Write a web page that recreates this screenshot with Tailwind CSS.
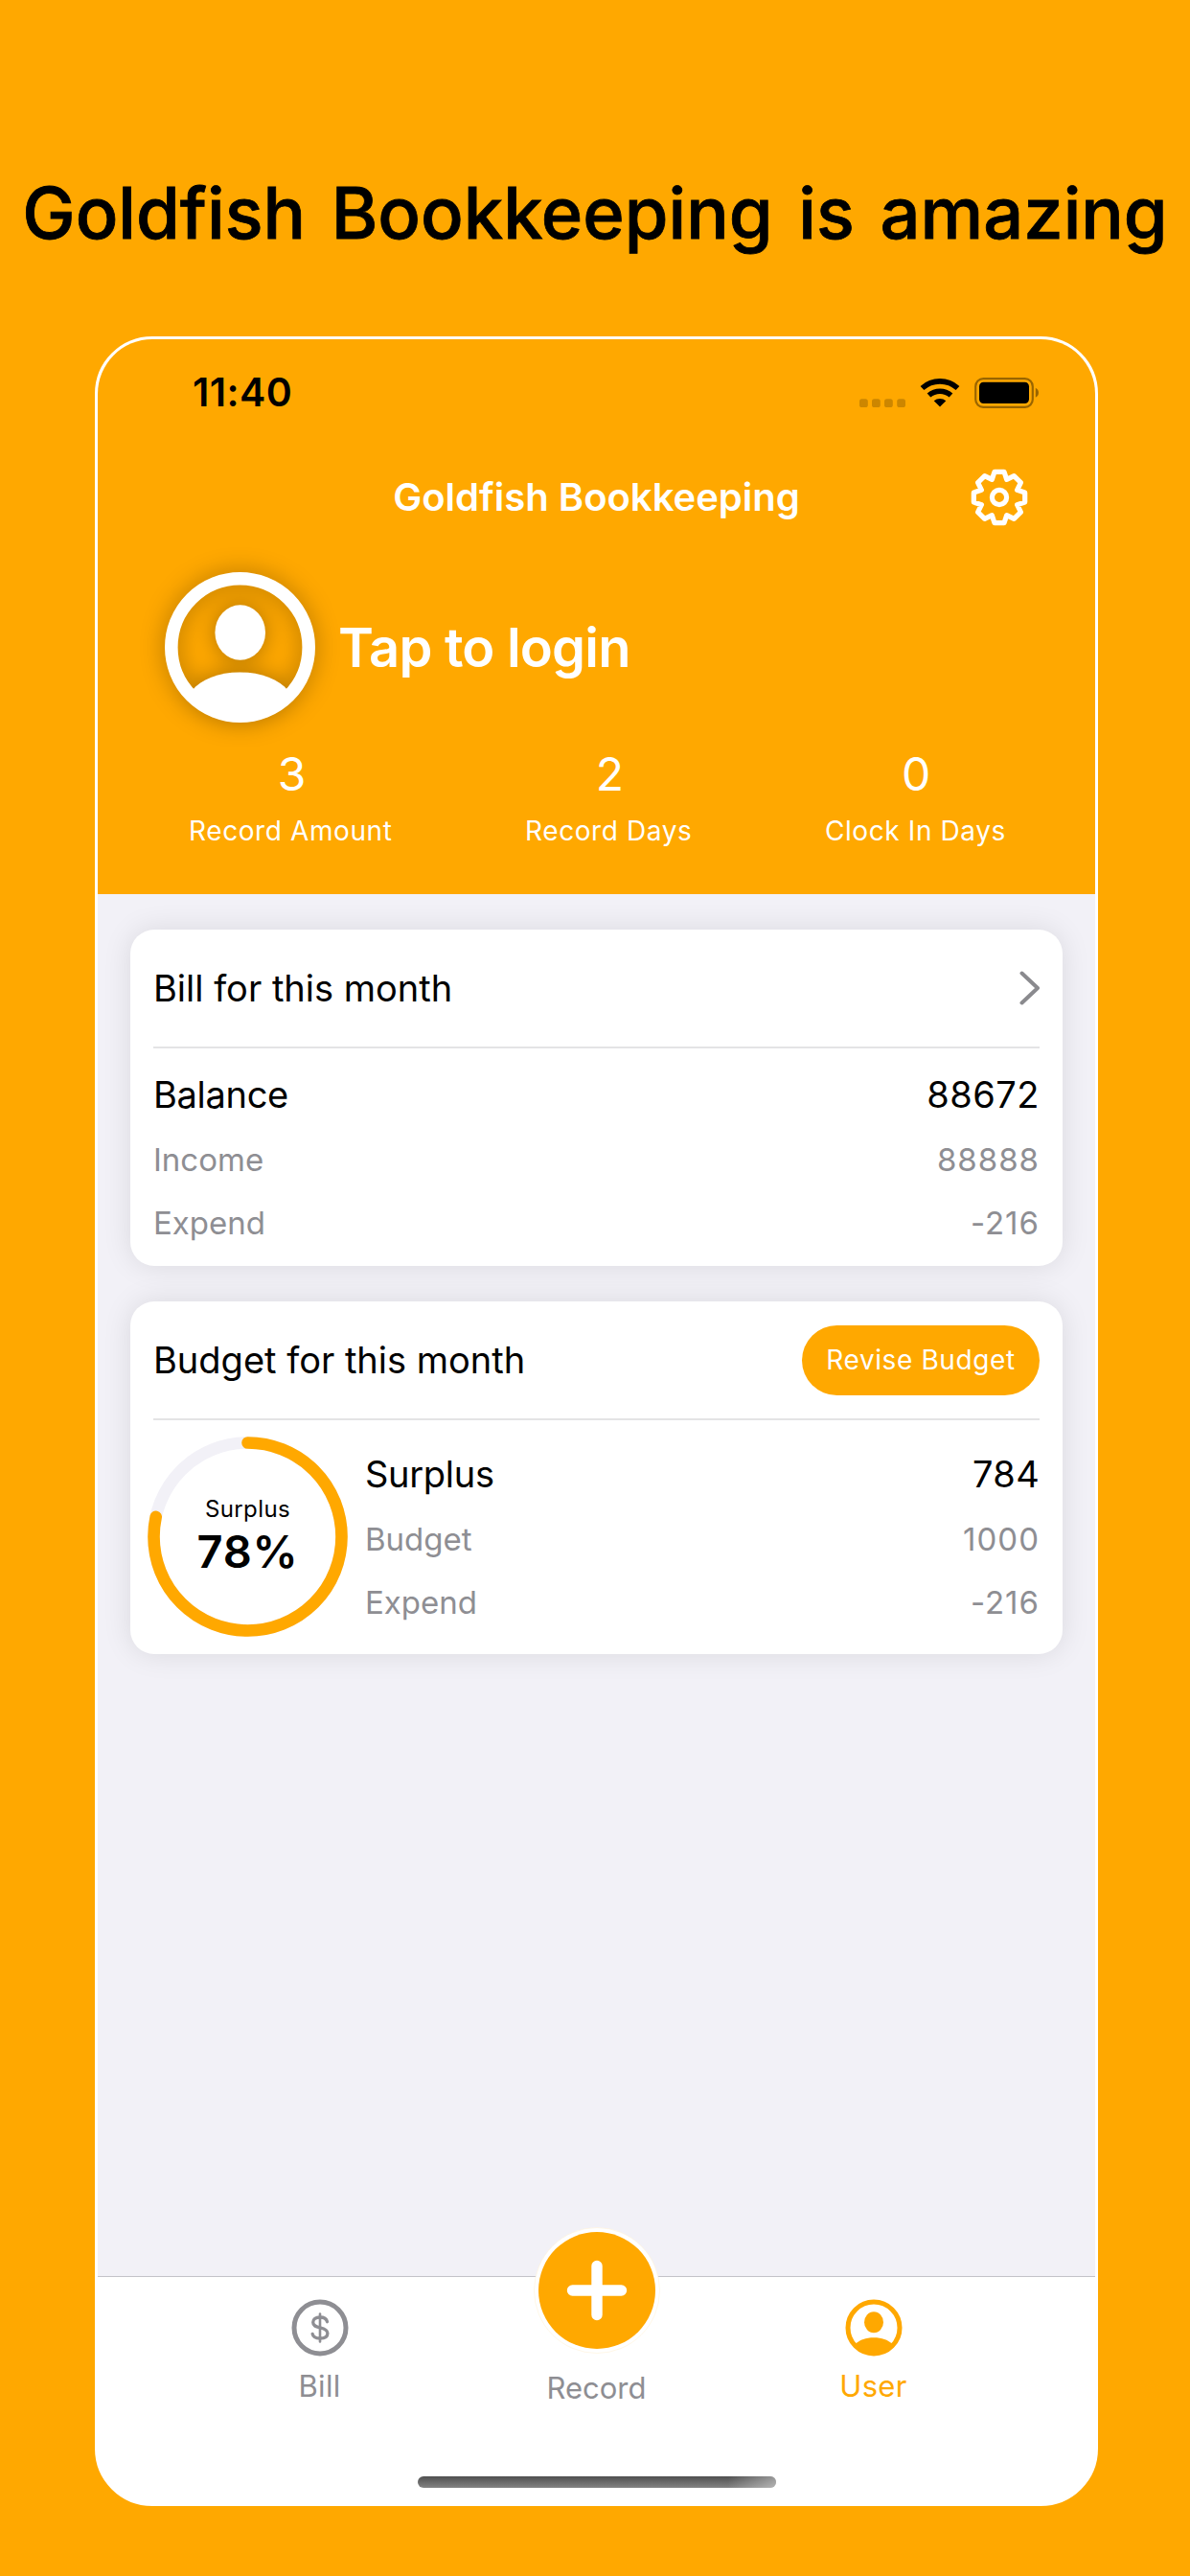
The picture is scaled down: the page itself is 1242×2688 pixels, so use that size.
<!DOCTYPE html>
<html lang="en">
<head>
  <meta charset="UTF-8" />
  <meta name="viewport" content="width=device-width, initial-scale=1" />
  <title>Goldfish Bookkeeping</title>
  <script src="https://cdn.jsdelivr.net/npm/@tailwindcss/browser@4"></script>
  <style>
    body {
      font-family: "Inter", sans-serif;
    }
  </style>
</head>
<body class="bg-[#ffa800]">
  <div class="w-[1242px] h-[2688px] flex flex-col items-center overflow-hidden">
    <h1 class="mt-[172px] h-[100px] leading-[100px] text-[74px] font-medium text-black whitespace-nowrap [word-spacing:7px] [-webkit-text-stroke:0.8px_black]">Goldfish Bookkeeping is amazing</h1>

    <div class="mt-[79px] ml-[3px] w-[1047px] h-[2264px] border-3 border-white rounded-[60px] bg-white overflow-hidden flex flex-col">
      <header class="h-[579px] shrink-0 bg-[#ffa800] text-white">
        <!-- status bar -->
        <div class="h-[112px] flex items-center justify-between pl-[99px] pr-[58px] text-black">
          <span class="text-[41px] font-semibold tracking-[0.4px]">11:40</span>
          <svg width="188" height="32" viewBox="0 0 188 32">
            <g fill="#cc8600">
              <rect x="0" y="22.3" width="8.8" height="8.8" rx="2.6" />
              <rect x="13" y="22.3" width="8.8" height="8.8" rx="2.6" />
              <rect x="26" y="22.3" width="8.8" height="8.8" rx="2.6" />
              <rect x="39.2" y="22.3" width="8.8" height="8.8" rx="2.6" />
            </g>
            <g fill="none" stroke="#000" stroke-width="5.6">
              <path d="M65.5 11 A27.5 27.5 0 0 1 102.5 11" />
              <path d="M72.5 18.500 A17.500 17.500 0 0 1 95.500 18.500" />
            </g>
            <path d="M84 30.600 L77.700 24.300 A9.500 9.500 0 0 1 90.300 24.300 Z" />
            <rect x="121.200" y="1.200" width="59.600" height="29.600" rx="8" fill="none" stroke="#996500" stroke-width="2.200" />
            <rect x="125" y="4.700" width="52" height="22.300" rx="4.500" />
            <path d="M183.800 10.800 Q187 12.500 187 15.800 Q187 19.200 183.800 20.800 Z" fill="#996500" />
          </svg>
        </div>

        <div class="h-[106px] grid grid-cols-[1fr_auto_1fr] items-center pr-[70px] pl-[70px]">
          <span></span>
          <span class="text-[40px] font-semibold">Goldfish Bookkeeping</span>
          <svg class="justify-self-end" width="60" height="60" viewBox="-30 -30 60 60" fill="none" stroke="#fff" stroke-width="5.200" stroke-linejoin="round">
            <path d="M-5 -26.700H5L7.700 -18.600L15.300 -22.400L22.400 -15.300L18.600 -7.700L26.700 -5V5L18.600 7.700L22.400 15.300L15.300 22.400L7.700 18.600L5 26.700H-5L-7.700 18.600L-15.300 22.400L-22.400 15.300L-18.600 7.700L-26.700 5V-5L-18.600 -7.700L-22.400 -15.300L-15.300 -22.400L-7.700 -18.600Z" />
            <circle r="7.600" />
          </svg>
        </div>

        <div class="mt-[25px] pl-[70px] h-[157px] flex items-center">
          <svg class="drop-shadow-[0_0_12px_rgba(0,0,0,0.32)]" width="157" height="157" viewBox="0 0 157 157">
            <circle cx="78.500" cy="78.500" r="71.700" fill="none" stroke="#fff" stroke-width="13.600" />
            <ellipse cx="78.700" cy="63" rx="26.300" ry="28.700" fill="#fff" />
            <path d="M28 124 C38 112 56 104.600 78.500 104.600 C101 104.600 119 112 129 124 C118 142 100 152 78.500 152 C57 152 39 142 28 124Z" fill="#fff" />
          </svg>
          <span class="ml-[24px] text-[56px] font-semibold tracking-[-0.8px]">Tap to login</span>
        </div>

        <div class="mt-[24px] pl-[95px] pr-[93px] flex justify-between text-center text-[28px] tracking-[0.6px]">
          <div>
            <div class="text-[48px] leading-[60px] pl-[3px]">3</div>
            <div class="mt-[9px] leading-[40px]">Record Amount</div>
          </div>
          <div>
            <div class="text-[48px] leading-[60px] pl-[3px]">2</div>
            <div class="mt-[9px] leading-[40px]">Record Days</div>
          </div>
          <div>
            <div class="text-[48px] leading-[60px] pl-[2px]">0</div>
            <div class="mt-[9px] leading-[40px]">Clock In Days</div>
          </div>
        </div>
      </header>

      <main class="h-[1442px] shrink-0 bg-[#f2f1f7] px-[34px] pt-[37px] flex flex-col gap-[37px] text-[38px] text-black">
        <section class="h-[351px] bg-white rounded-[25px] px-[24px] shadow-[0_0_30px_rgba(0,0,0,0.1)]">
          <div class="h-[124px] flex items-center justify-between border-b-2 border-[#e4e4e5]">
            <h2>Bill for this month</h2>
            <svg width="22" height="36" viewBox="0 0 22 36" fill="none" stroke="#8a8a8e" stroke-width="4" stroke-linecap="round" stroke-linejoin="round">
              <path d="M3.500 2.500 L20 18 L3.500 33.500" />
            </svg>
          </div>
          <div class="pt-[14px]">
            <div class="h-[68px] flex items-center justify-between"><span class="tracking-[-0.3px]">Balance</span><span class="tracking-[0.5px]">88672</span></div>
            <div class="h-[70px] flex items-center justify-between text-[33px] text-[#8e8e93]"><span>Income</span><span class="tracking-[1px]">88888</span></div>
            <div class="h-[62px] flex items-center justify-between text-[33px] text-[#8e8e93]"><span>Expend</span><span class="tracking-[1px]">-216</span></div>
          </div>
        </section>

        <section class="h-[368px] bg-white rounded-[25px] px-[24px] shadow-[0_0_30px_rgba(0,0,0,0.1)]">
          <div class="h-[124px] flex items-center justify-between border-b-2 border-[#e4e4e5]">
            <h2>Budget for this month</h2>
            <button class="w-[248px] h-[73px] rounded-full bg-[#ffa800] text-white text-[28px] tracking-[0.6px]">Revise Budget</button>
          </div>
          <div class="flex">
            <div class="-ml-[6px] mt-[17px] size-[209px] grid place-items-center">
              <svg class="col-start-1 row-start-1" width="209" height="209" viewBox="0 0 209 209" fill="none" stroke-width="12.600">
                <circle cx="104.500" cy="104.500" r="98" stroke="#f2f1f7" />
                <circle cx="104.500" cy="104.500" r="98" stroke="#ffa800" stroke-linecap="round" pathLength="100" stroke-dasharray="78.400 100" transform="rotate(-90 104.500 104.500)" />
              </svg>
              <div class="col-start-1 row-start-1 text-center -mt-[3px]">
                <div class="text-[24px] leading-[32px] tracking-[0.4px]">Surplus</div>
                <div class="text-[47px] leading-[55px] font-semibold tracking-[0.8px]">78%</div>
              </div>
            </div>
            <div class="ml-[18px] flex-1 pt-[22px]">
              <div class="h-[68px] flex items-center justify-between"><span class="tracking-[-0.3px]">Surplus</span><span class="tracking-[0.3px]">784</span></div>
              <div class="h-[70px] flex items-center justify-between text-[33px] text-[#8e8e93]"><span>Budget</span><span class="tracking-[1px]">1000</span></div>
              <div class="h-[62px] flex items-center justify-between text-[33px] text-[#8e8e93]"><span>Expend</span><span class="tracking-[1px]">-216</span></div>
            </div>
          </div>
        </section>
      </main>

      <nav class="h-[237px] shrink-0 bg-white border-t border-[#c4c3c9] flex flex-col items-center text-[31px] leading-[40px] text-[#8e8e93]">
        <div class="h-[208px] flex justify-center">
          <a class="w-[289px] flex flex-col items-center pt-[23px]">
            <svg width="60" height="60" viewBox="-30 -30 60 60" fill="none" stroke="#8e8e93" stroke-linecap="round">
              <circle r="27" stroke-width="5" />
              <path d="M7.500 -6.300C6.700 -9.500 4 -11 0 -11C-4.400 -11 -7.300 -9 -7.300 -5.700C-7.300 -2.200 -4.500 -1.200 0 -0.200C4.700 0.900 7.900 2.100 7.900 5.700C7.900 9.200 4.800 11 0 11C-4.200 11 -7.300 9.500 -7.900 6.300" stroke-width="3.300" />
              <path d="M0 -14.500V14.500" stroke-width="2.600" />
            </svg>
            <span class="mt-[11px] tracking-[0.3px]">Bill</span>
          </a>
          <a class="w-[289px] flex flex-col items-center">
            <!-- round add button sits over the bar's top edge -->
            <svg class="-mt-[52px] relative" width="132" height="132" viewBox="-66 -66 132 132">
              <circle r="65.500" fill="#fff" stroke="#fff1d6" stroke-width="0.600" />
              <circle r="61" fill="#ffa800" />
              <path d="M0 -25.500V25.500M-25.500 0H25.500" stroke="#fff" stroke-width="11.400" stroke-linecap="round" />
            </svg>
            <span class="mt-[16px]">Record</span>
          </a>
          <a class="w-[289px] flex flex-col items-center pt-[23px] text-[#ffa800]">
            <svg width="60" height="60" viewBox="-30 -30 60 60">
              <circle r="27" fill="none" stroke="#ffa800" stroke-width="5" />
              <ellipse cy="-5.800" rx="10" ry="11" fill="#ffa800" />
              <path d="M-19 16.500 C-14.500 12.500 -8.500 10.200 0 10.200 C8.500 10.200 14.500 12.500 19 16.500 C15 24 8 28 0 28 C-8 28 -15 24 -19 16.500Z" fill="#ffa800" />
            </svg>
            <span class="mt-[11px] tracking-[0.3px]">User</span>
          </a>
        </div>
        <div class="w-[374px] h-[12px] shrink-0 rounded-full bg-linear-to-b from-[#505050] to-[#838383] overflow-hidden flex justify-end">
          <div class="w-[50px] h-full bg-linear-to-r from-white/0 to-white/40"></div>
        </div>
      </nav>
    </div>
  </div>
</body>
</html>
